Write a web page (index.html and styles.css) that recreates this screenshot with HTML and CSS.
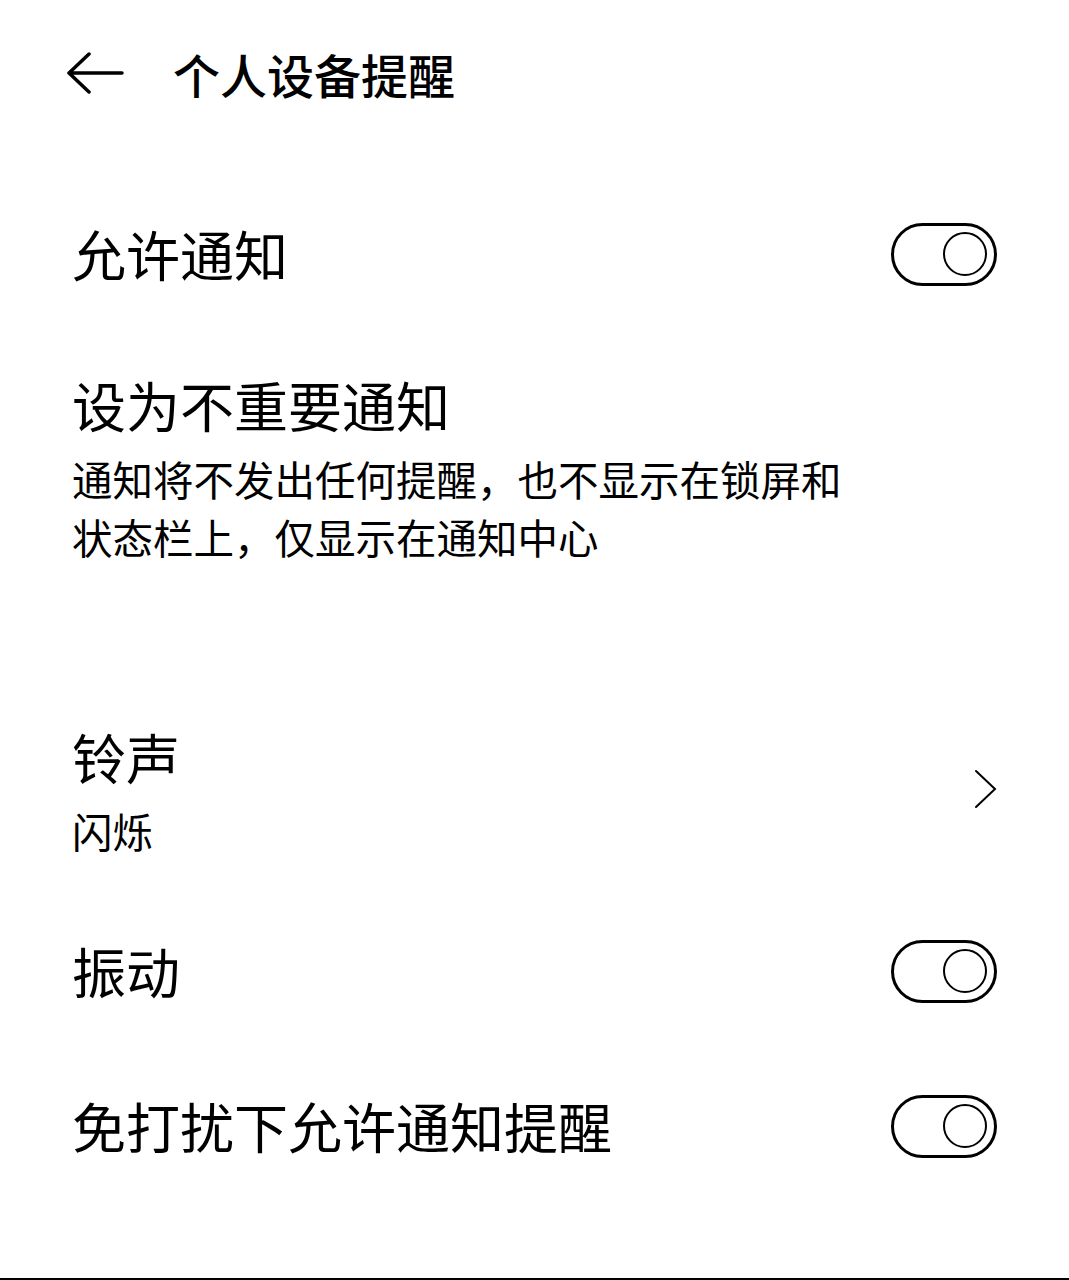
FILE: index.html
```html
<!DOCTYPE html>
<html lang="zh-CN">
<head>
<meta charset="utf-8"/>
<meta content="width=device-width, initial-scale=1.0" name="viewport"/>
<title>个人设备提醒</title>
<link rel="stylesheet" href="styles.css">
</head>
<body>
<div class="screen">
  <div class="header">
    <svg class="back-icon" width="58" height="44" viewBox="0 0 58 44">
      <path d="M3 21 H56 M23 2 L3 21 L23 40" fill="none" stroke="#000" stroke-width="3.5" stroke-linecap="round" stroke-linejoin="round"/>
    </svg>
    <div class="header-title">个人设备提醒</div>
  </div>

  <div class="row first">
    <div class="row-title">允许通知</div>
    <div class="toggle"><span class="knob"></span></div>
  </div>

  <div class="row block">
    <div class="row-text">
      <div class="row-title">设为不重要通知</div>
      <div class="row-sub">通知将不发出任何提醒，也不显示在锁屏和<br>状态栏上，仅显示在通知中心</div>
    </div>
  </div>

  <div class="row ringtone">
    <div class="row-text">
      <div class="row-title">铃声</div>
      <div class="row-sub">闪烁</div>
    </div>
    <svg class="chevron" width="24" height="40" viewBox="0 0 24 40">
      <path d="M2 2 L21 20 L2 38" fill="none" stroke="#000" stroke-width="2" stroke-linecap="round"/>
    </svg>
  </div>

  <div class="row vibrate">
    <div class="row-title">振动</div>
    <div class="toggle"><span class="knob"></span></div>
  </div>

  <div class="row dnd">
    <div class="row-title">免打扰下允许通知提醒</div>
    <div class="toggle"><span class="knob"></span></div>
  </div>
</div>
</body>
</html>
```

FILE: styles.css
```css
body {
  margin: 0;
  background-color: #ffffff;
  color: #000000;
  font-family: "Noto Sans CJK SC", "Noto Sans", sans-serif;
}
.screen {
  height: 1280px;
  box-sizing: border-box;
  border-bottom: 2px solid #000;
}
.header {
  height: 148px;
  display: flex;
  align-items: center;
  padding-left: 66px;
}
.back-icon {
  display: block;
}
.header-title {
  margin-left: 49px;
  font-size: 47px;
  font-weight: 500;
  line-height: 60px;
}
.row {
  display: flex;
  align-items: center;
  justify-content: space-between;
  padding: 0 72px;
}
.row-title {
  font-size: 54px;
  line-height: 64px;
}
.row-sub {
  font-size: 40.5px;
  line-height: 58px;
  margin-top: 13px;
}
.first {
  margin-top: 74px;
}
.block {
  margin-top: 87px;
}
.ringtone {
  margin-top: 159px;
}
.vibrate {
  margin-top: 79px;
}
.dnd {
  margin-top: 91px;
}
.chevron {
  display: block;
  margin-right: -1px;
  margin-bottom: 8px;
}
.toggle {
  width: 106px;
  height: 63px;
  box-sizing: border-box;
  border: 3px solid #000;
  border-radius: 32px;
  display: flex;
  align-items: center;
  justify-content: flex-end;
  padding-right: 7px;
}
.knob {
  width: 44px;
  height: 44px;
  box-sizing: border-box;
  border: 2.5px solid #000;
  border-radius: 50%;
}
```
